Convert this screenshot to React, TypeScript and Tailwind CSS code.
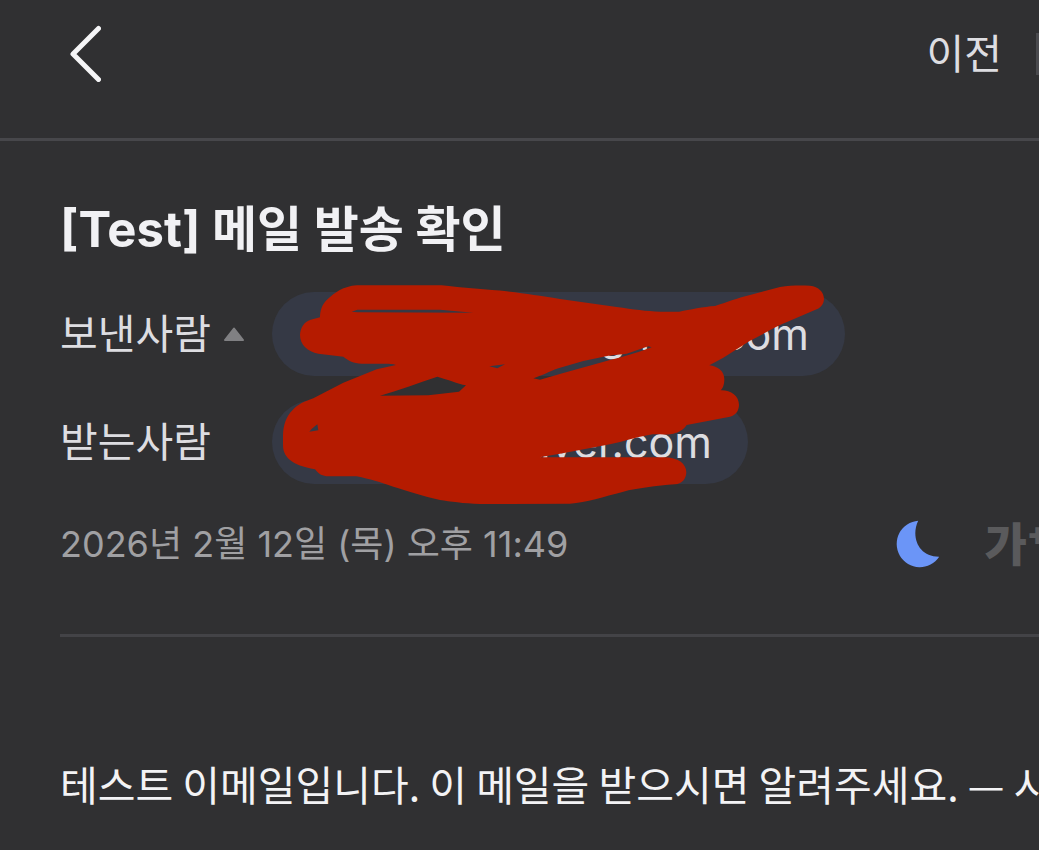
import React from "react";

function BackIcon() {
  return (
    <svg viewBox="0 0 34 58" className="h-[58px] w-[34px]" fill="none" aria-hidden="true">
      <path d="M31.500 4.500 L6 30 L31.500 55.500" stroke="#f5f5f7" strokeWidth="5" strokeLinecap="round" strokeLinejoin="round" />
    </svg>
  );
}

function MoonIcon() {
  return (
    <svg viewBox="0 0 44 48" className="h-12 w-11" aria-hidden="true">
      <path d="M22.200 .8 C14.500 17 22.500 37 43.200 36.800 A23.200 23.200 0 1 1 22.200 .8 Z" fill="#6b95f7" />
    </svg>
  );
}

function Scribble() {
  return (
    <svg
      viewBox="0 0 1770 720"
      className="pointer-events-none absolute -top-[17px] left-[200px] h-[240px] w-[590px]"
      aria-hidden="true"
    >
      <path
        fill="#b51b00"
        fillRule="evenodd"
        d="M290 31 L545 31 C600 38 690 44 740 49 C800 56 840 62 900 72 L1070 96 C1120 103 1160 109 1200 110 L1258 110 C1290 104 1330 95 1365 93 C1400 82 1430 70 1470 60 L1560 36 C1590 31 1620 31 1650 32 C1676 34 1692 52 1692 72 C1691 88 1682 98 1670 103 L1560 150 C1530 164 1500 184 1470 197 L1390 248 L1348 271 C1374 274 1392 288 1393 312 C1393 330 1388 340 1382 346 C1412 345 1437 362 1437 390 C1436 408 1428 420 1410 425 L1280 450 C1270 464 1258 472 1240 476 C1215 481 1190 476 1170 479 C1130 485 1090 500 1050 508 L900 536 L838 547 L1200 547 C1250 543 1279 564 1279 592 C1278 612 1266 627 1245 628 C1190 632 1130 640 1090 650 C1030 665 980 682 930 686 L660 687 C610 685 570 680 540 675 C490 663 440 647 400 635 C360 622 330 612 290 604 L205 604 C188 604 177 598 165 583 C130 576 105 568 90 555 C73 540 69 525 69 510 L69 480 C70 450 78 425 98 405 C115 387 132 380 160 370 L250 323 L350 283 L408 270 C398 266 388 266 375 266 L305 266 C280 265 266 257 250 245 L175 236 C143 230 120 210 120 180 C121 158 132 140 152 134 L180 127 C180 108 185 90 200 75 C225 52 250 34 290 31 Z M275 110 L292 104 L540 104 L640 113 L292 112 Z M360 362 C420 344 475 324 532 305 C565 314 592 326 618 331 L597 350 L505 361 Z M148 470 C155 461 163 455 172 448 L175 466 Z M688 274 L735 268 L712 280 Z M820 310 C845 302 865 291 895 280 L970 258 L1045 242 L1100 236 L1165 214 L1175 217 C1130 234 1090 246 1050 255 L910 294 L840 314 Z"
      />
    </svg>
  );
}

function AddressRow({
  label,
  domain,
  pillClass,
  expandable = false,
}: {
  label: string;
  domain: string;
  pillClass: string;
  expandable?: boolean;
}) {
  return (
    <div className="flex items-center">
      <dt className="flex w-[212px] shrink-0 items-center gap-3 text-[41px] leading-[60px]">
        {label}
        {expandable && (
          <button type="button" aria-label="접기">
            <svg viewBox="0 0 22 16" className="h-4 w-[22px]" aria-hidden="true">
              <path d="M11 2.500 L20 14 L2 14 Z" fill="#808083" stroke="#808083" strokeWidth="2" strokeLinejoin="round" />
            </svg>
          </button>
        )}
      </dt>
      <dd className="min-w-0">
        <button
          type="button"
          className={`flex h-[84px] items-center justify-end rounded-full bg-[#353945] px-9 text-[43px] leading-[60px] ${pillClass}`}
        >
          {domain}
        </button>
      </dd>
    </div>
  );
}

export default function App() {
  return (
    <div className="min-h-screen overflow-hidden bg-[#303032] font-['Inter','Noto_Sans_CJK_KR',sans-serif] text-[#dddde1]">
      <header className="flex h-[141px] items-start justify-between border-b-[3px] border-[#47474b] pt-6 pl-[67px]">
        <button type="button" aria-label="뒤로">
          <BackIcon />
        </button>
        <nav className="flex items-center gap-[34px]">
          <a href="#prev" className="text-[41px] leading-[60px]">이전</a>
          <span className="h-[42px] w-[3px] bg-[#4a4a4e]" />
        </nav>
      </header>

      <main className="pl-[60px]">
        <section className="border-b-[3px] border-[#434347] pt-[53px] pb-[60px]">
          <h1 className="text-[49px] leading-[72px] font-bold text-[#f1f1f4]">[Test] 메일 발송 확인</h1>

          <dl className="relative mt-[26px] flex flex-col gap-6">
            <AddressRow label="보낸사람" domain="gmail.com" pillClass="w-[573px]" expandable />
            <AddressRow label="받는사람" domain="naver.com" pillClass="w-[476px]" />
            <Scribble />
          </dl>

          <div className="mt-[30px] flex h-[60px] items-center justify-between">
            <time dateTime="2026-02-12T23:49" className="text-[36px] leading-[60px] whitespace-nowrap text-[#a0a0a3]">
              2026년 2월 12일 (목) 오후 11:49
            </time>
            <div className="-mr-2.5 flex shrink-0 items-center gap-11">
              <button type="button" aria-label="다크 모드">
                <MoonIcon />
              </button>
              <button type="button" aria-label="글자 크기" className="flex items-start text-[46px] leading-[60px] font-black text-[#5a5a5c]">
                가<span className="text-[32px] leading-10">+</span>
              </button>
            </div>
          </div>
        </section>

        <p className="pt-[116px] font-['Noto_Sans_CJK_KR',sans-serif] text-[41px] leading-[60px] whitespace-nowrap text-[#f3f3f5]">
          테스트 이메일입니다. 이 메일을 받으시면 알려주세요. — 시
        </p>
      </main>
    </div>
  );
}
